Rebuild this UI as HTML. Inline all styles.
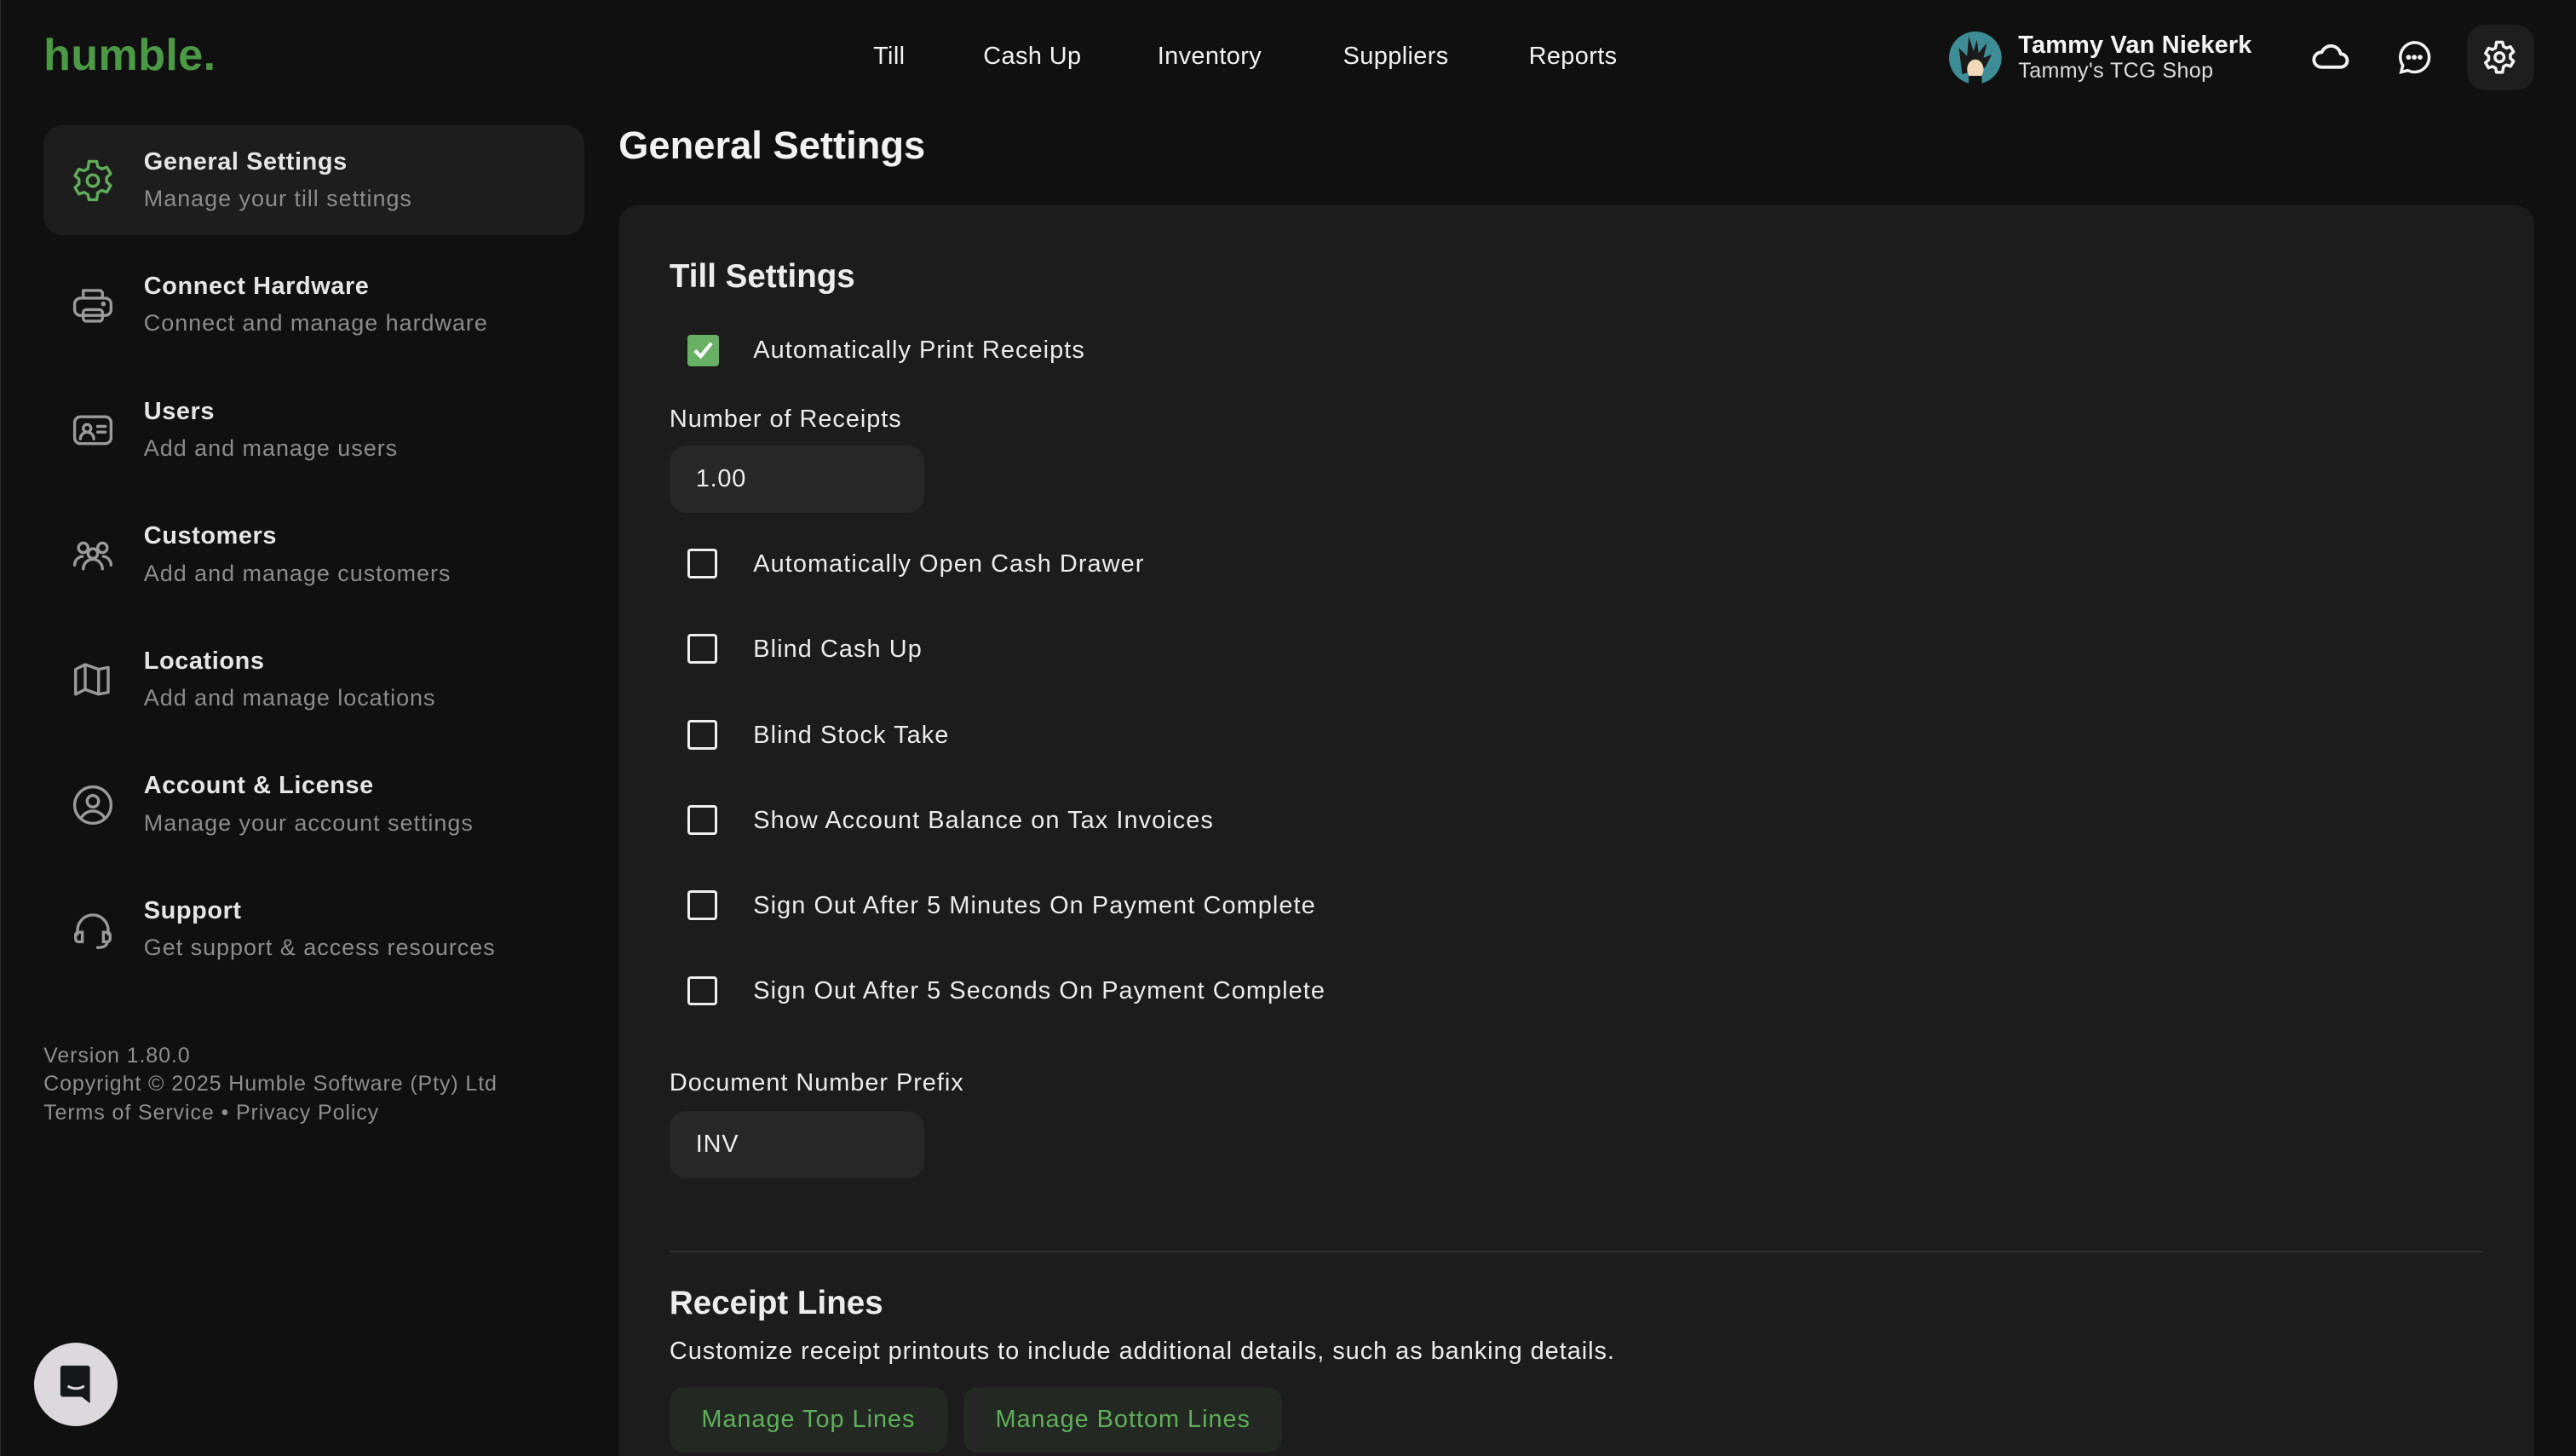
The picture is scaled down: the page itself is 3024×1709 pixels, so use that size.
<!DOCTYPE html>
<html><head><meta charset="utf-8">
<style>
html,body{margin:0;padding:0;background:#101010;overflow:hidden}
#root{zoom:1.92857;width:1568px;height:886px;position:relative;background:#101010;font-family:"Liberation Sans",Arial,sans-serif;color:#eee;overflow:hidden;border-left:1px solid #2a2a2a;box-sizing:border-box}
.a{position:absolute;white-space:nowrap}
.nav{top:26px;font-size:15px;font-weight:500;color:#f2f2f2;letter-spacing:0.2px}
.item{position:absolute;left:26px;width:329px;height:67px;border-radius:12px}
.item .t{position:absolute;left:61px;top:14px;font-size:15px;font-weight:bold;color:#e6e6e6;letter-spacing:0.3px}
.item .s{position:absolute;left:61px;top:37px;font-size:14px;color:#8c8c8c;letter-spacing:0.5px}
.item svg{position:absolute;left:16px;top:20px}
.cb{position:absolute;left:418px;width:15px;height:15px;border:2px solid #eee;border-radius:2px}
.lbl{position:absolute;left:458px;font-size:15px;color:#ececec;letter-spacing:0.55px}
.inp{position:absolute;left:407px;width:155px;height:41px;background:#272727;border-radius:10px;font-size:15px;color:#eee;line-height:41px;text-indent:16px;letter-spacing:0.4px}
.btn{position:absolute;top:844px;height:40px;background:#232823;border-radius:9px;color:#5fae5a;font-size:15px;line-height:40px;text-align:center;letter-spacing:0.5px}
</style></head><body><div id="root">
<div class="a" style="left:26px;top:18px;font-size:27px;font-weight:bold;color:#4c9a45;letter-spacing:0.2px">humble.</div>
<div class="a nav" style="left:531px">Till</div>
<div class="a nav" style="left:598px">Cash Up</div>
<div class="a nav" style="left:704px">Inventory</div>
<div class="a nav" style="left:817px">Suppliers</div>
<div class="a nav" style="left:930px">Reports</div>

<svg class="a" style="left:1186px;top:19px" width="32" height="32" viewBox="0 0 32 32"><circle cx="16" cy="16" r="16" fill="#3e8c96"/><path d="M8 26 L6 10 L11 15 L12 3 L15 12 L17 5 L18 13 L23 7 L21 16 L26 14 L22 22 Z" fill="#1a1a1a"/><ellipse cx="16" cy="23" rx="5" ry="6" fill="#f0d8b8"/><rect x="12" y="27" width="8" height="5" fill="#111"/></svg>
<div class="a" style="left:1228px;top:19px;font-size:15px;font-weight:bold;color:#f4f4f4;letter-spacing:0.1px">Tammy Van Niekerk</div>
<div class="a" style="left:1228px;top:36px;font-size:13px;color:#ddd;letter-spacing:0.2px">Tammy's TCG Shop</div>
<svg class="a" style="left:1406px;top:24px" width="24" height="22" viewBox="0 0 24 22" fill="none" stroke="#f2f2f2" stroke-width="2" stroke-linejoin="round"><path d="M6 17h12a4 4 0 0 0 0-8 6 6 0 0 0-11.5-1A4.5 4.5 0 0 0 6 17z"/></svg>
<svg class="a" style="left:1458px;top:24px" width="22" height="22" viewBox="0 0 22 22" fill="none" stroke="#f2f2f2" stroke-width="1.8"><path d="M11 2a9 9 0 0 1 0 18 9 9 0 0 1-4-1L3 20l1-4a9 9 0 0 1 7-14z"/><circle cx="7.5" cy="11" r=".6" fill="#f2f2f2"/><circle cx="11" cy="11" r=".6" fill="#f2f2f2"/><circle cx="14.5" cy="11" r=".6" fill="#f2f2f2"/></svg>
<div class="a" style="left:1501px;top:15px;width:41px;height:40px;background:#1e1e1e;border-radius:11px"></div>
<svg class="a" style="left:1510px;top:24px" width="22" height="22" viewBox="0 0 24 24" fill="none" stroke="#f2f2f2" stroke-width="2" stroke-linejoin="round"><path d="M10 2h4l.6 2.8 2 1.1 2.7-.9 2 3.4-2.1 1.9v2.4l2.1 1.9-2 3.4-2.7-.9-2 1.1L14 22h-4l-.6-2.8-2-1.1-2.7.9-2-3.4 2.1-1.9v-2.4L2.7 9.4l2-3.4 2.7.9 2-1.1z"/><circle cx="12" cy="12" r="3"/></svg>

<div class="item" style="top:76px;background:#1d1d1d">
<svg width="28" height="28" viewBox="0 0 24 24" fill="none" stroke="#5fae5a" stroke-width="1.5" stroke-linejoin="round"><path d="M10 2h4l.6 2.8 2 1.1 2.7-.9 2 3.4-2.1 1.9v2.4l2.1 1.9-2 3.4-2.7-.9-2 1.1L14 22h-4l-.6-2.8-2-1.1-2.7.9-2-3.4 2.1-1.9v-2.4L2.7 9.4l2-3.4 2.7.9 2-1.1z"/><circle cx="12" cy="12" r="3"/></svg>
<div class="t">General Settings</div><div class="s">Manage your till settings</div></div>
<div class="item" style="top:152px">
<svg width="28" height="28" viewBox="0 0 24 24" fill="none" stroke="#9a9a9a" stroke-width="1.5" stroke-linejoin="round"><path d="M7 8V4h9l1 1v3"/><rect x="2.5" y="8" width="19" height="9" rx="3"/><rect x="7" y="14" width="10" height="6" rx="1.5"/><circle cx="17.5" cy="11" r=".5" fill="#9a9a9a"/></svg>
<div class="t">Connect Hardware</div><div class="s">Connect and manage hardware</div></div>
<div class="item" style="top:228px">
<svg width="28" height="28" viewBox="0 0 24 24" fill="none" stroke="#9a9a9a" stroke-width="1.5" stroke-linecap="round"><rect x="2.5" y="5" width="19" height="14" rx="3"/><circle cx="9" cy="11" r="2"/><path d="M5.5 16.5a3.5 3.5 0 0 1 7 0M14.5 10h4M14.5 13h4"/></svg>
<div class="t">Users</div><div class="s">Add and manage users</div></div>
<div class="item" style="top:304px">
<svg width="28" height="28" viewBox="0 0 24 24" fill="none" stroke="#9a9a9a" stroke-width="1.5" stroke-linecap="round"><circle cx="7" cy="8" r="2.5"/><circle cx="17" cy="8" r="2.5"/><circle cx="12" cy="11" r="2.5"/><path d="M2.5 17a4.5 4.5 0 0 1 4-4.5M21.5 17a4.5 4.5 0 0 0-4-4.5M7 19a5 5 0 0 1 10 0"/></svg>
<div class="t">Customers</div><div class="s">Add and manage customers</div></div>
<div class="item" style="top:380px">
<svg width="28" height="28" viewBox="0 0 24 24" fill="none" stroke="#9a9a9a" stroke-width="1.5" stroke-linejoin="round"><path d="M3 6.5l5-2.5 7 2.5 5-1v13l-5 1-7-2.5-5 2.5z"/><path d="M8 4v13.5M15 6.5v13"/></svg>
<div class="t">Locations</div><div class="s">Add and manage locations</div></div>
<div class="item" style="top:456px">
<svg width="28" height="28" viewBox="0 0 24 24" fill="none" stroke="#9a9a9a" stroke-width="1.5"><circle cx="12" cy="12" r="9.5"/><circle cx="12" cy="10" r="3"/><path d="M6 18.5a7 7 0 0 1 12 0"/></svg>
<div class="t">Account &amp; License</div><div class="s">Manage your account settings</div></div>
<div class="item" style="top:532px">
<svg width="28" height="28" viewBox="0 0 24 24" fill="none" stroke="#9a9a9a" stroke-width="1.5" stroke-linecap="round"><path d="M4 14v-2a8 8 0 0 1 16 0v2"/><path d="M4 13h2.5v5H4.5A1.5 1.5 0 0 1 3 16.5v-2A1.5 1.5 0 0 1 4 13zM20 13h-2.5v5h2A1.5 1.5 0 0 0 21 16.5v-2A1.5 1.5 0 0 0 20 13z"/><path d="M19.5 18c0 2-2 3-5 3"/></svg>
<div class="t">Support</div><div class="s">Get support &amp; access resources</div></div>

<div class="a" style="left:26px;top:634px;font-size:13px;color:#8e8e8e;line-height:17.5px;letter-spacing:0.45px">Version 1.80.0<br>Copyright © 2025 Humble Software (Pty) Ltd<br>Terms of Service • Privacy Policy</div>
<div class="a" style="left:20px;top:817px;width:51px;height:51px;border-radius:50%;background:#dcd8dd"></div>
<svg class="a" style="left:35px;top:829px" width="22" height="26" viewBox="0 0 22 26"><path d="M3 2h15a1.5 1.5 0 0 1 1.5 1.5V25l-5-4H3a1.5 1.5 0 0 1-1.5-1.5v-16A1.5 1.5 0 0 1 3 2z" fill="#15171b"/><path d="M6 14.5q5 3 10 0" stroke="#dcd8dd" stroke-width="1.6" fill="none"/></svg>

<div class="a" style="left:376px;top:75px;font-size:23.5px;font-weight:bold;color:#f2f2f2">General Settings</div>
<div class="a" style="left:376px;top:125px;width:1166px;height:780px;background:#1c1c1c;border-radius:12px"></div>
<div class="a" style="left:407px;top:157px;font-size:20px;font-weight:bold;color:#ededed">Till Settings</div>
<div class="a" style="left:418px;top:204px;width:19px;height:19px;background:#68b063;border-radius:2px"></div>
<svg class="a" style="left:420px;top:206px" width="15" height="15" viewBox="0 0 15 15"><path d="M2.5 7.5l3.5 3.5 6.5-8" stroke="#fff" stroke-width="2.2" fill="none"/></svg>
<div class="lbl" style="top:205px">Automatically Print Receipts</div>
<div class="a" style="left:407px;top:247px;font-size:15px;color:#ececec;letter-spacing:0.5px">Number of Receipts</div>
<div class="inp" style="top:271px">1.00</div>
<div class="cb" style="top:334px"></div><div class="lbl" style="top:335px">Automatically Open Cash Drawer</div>
<div class="cb" style="top:386px"></div><div class="lbl" style="top:387px">Blind Cash Up</div>
<div class="cb" style="top:438px"></div><div class="lbl" style="top:439px">Blind Stock Take</div>
<div class="cb" style="top:490px"></div><div class="lbl" style="top:491px">Show Account Balance on Tax Invoices</div>
<div class="cb" style="top:542px"></div><div class="lbl" style="top:543px">Sign Out After 5 Minutes On Payment Complete</div>
<div class="cb" style="top:594px"></div><div class="lbl" style="top:595px">Sign Out After 5 Seconds On Payment Complete</div>
<div class="a" style="left:407px;top:651px;font-size:15px;color:#ececec;letter-spacing:0.5px">Document Number Prefix</div>
<div class="inp" style="top:676px">INV</div>
<div class="a" style="left:407px;top:761px;width:1104px;height:1px;background:#2f2f2f"></div>
<div class="a" style="left:407px;top:782px;font-size:20px;font-weight:bold;color:#ededed">Receipt Lines</div>
<div class="a" style="left:407px;top:814px;font-size:15px;color:#ececec;letter-spacing:0.5px">Customize receipt printouts to include additional details, such as banking details.</div>
<div class="btn" style="left:407px;width:169px">Manage Top Lines</div>
<div class="btn" style="left:586px;width:194px">Manage Bottom Lines</div>
</div></body></html>
